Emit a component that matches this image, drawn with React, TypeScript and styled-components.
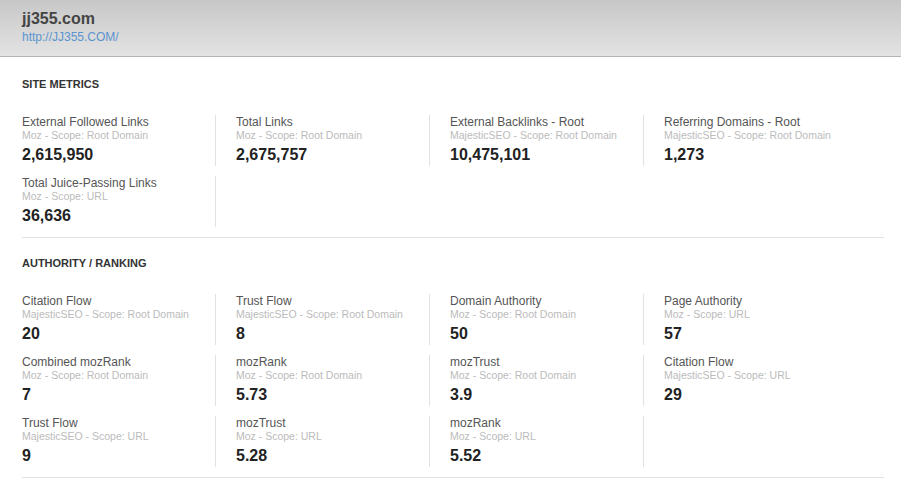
import React from "react";
import styled, { createGlobalStyle } from "styled-components";

const Global = createGlobalStyle`
  html, body { margin: 0; padding: 0; background: #fff; }
  body { font-family: Arial, "Liberation Sans", Helvetica, sans-serif; }
`;

const Page = styled.div`
  width: 901px;
  min-height: 492px;
  background: #fff;
`;

const Header = styled.header`
  box-sizing: content-box;
  height: 47px;
  padding: 9px 22px 0;
  background: linear-gradient(to bottom, #c7c7c7 0%, #e3e3e3 100%);
  border-bottom: 1px solid #b3b3b3;
`;

const Title = styled.h1`
  margin: 0;
  font-size: 16px;
  line-height: 20px;
  font-weight: bold;
  color: #444;
`;

const Url = styled.a`
  display: block;
  margin-top: 1px;
  font-size: 12px;
  line-height: 14px;
  color: #5a94cf;
  text-decoration: none;
`;

const Body = styled.main`
  padding: 2px 17px 0 22px;
`;

const Section = styled.section`
  padding: 18px 0 10px;
  border-bottom: 1px solid #e3e3e3;
`;

const SectionTitle = styled.h2`
  margin: 0 0 24px;
  font-size: 11px;
  line-height: 14px;
  font-weight: bold;
  text-transform: uppercase;
  color: #333;
`;

const Grid = styled.div`
  display: grid;
  grid-template-columns: repeat(4, 194px);
  column-gap: 20px;
  row-gap: 10px;
`;

const Cell = styled.div<{ $last: boolean }>`
  height: 51px;
  box-sizing: border-box;
  border-right: ${(p) => (p.$last ? "none" : "1px solid #e2e2e2")};
`;

const Label = styled.div`
  font-size: 12px;
  line-height: 14px;
  color: #555;
  white-space: nowrap;
`;

const Source = styled.div`
  font-size: 10.5px;
  line-height: 13px;
  color: #bbb;
  white-space: nowrap;
`;

const Value = styled.div`
  margin-top: 3px;
  font-size: 16px;
  line-height: 20px;
  font-weight: bold;
  color: #222;
`;

type Metric = { label: string; source: string; value: string };

const siteMetrics: Metric[] = [
  { label: "External Followed Links", source: "Moz - Scope: Root Domain", value: "2,615,950" },
  { label: "Total Links", source: "Moz - Scope: Root Domain", value: "2,675,757" },
  { label: "External Backlinks - Root", source: "MajesticSEO - Scope: Root Domain", value: "10,475,101" },
  { label: "Referring Domains - Root", source: "MajesticSEO - Scope: Root Domain", value: "1,273" },
  { label: "Total Juice-Passing Links", source: "Moz - Scope: URL", value: "36,636" },
];

const authority: Metric[] = [
  { label: "Citation Flow", source: "MajesticSEO - Scope: Root Domain", value: "20" },
  { label: "Trust Flow", source: "MajesticSEO - Scope: Root Domain", value: "8" },
  { label: "Domain Authority", source: "Moz - Scope: Root Domain", value: "50" },
  { label: "Page Authority", source: "Moz - Scope: URL", value: "57" },
  { label: "Combined mozRank", source: "Moz - Scope: Root Domain", value: "7" },
  { label: "mozRank", source: "Moz - Scope: Root Domain", value: "5.73" },
  { label: "mozTrust", source: "Moz - Scope: Root Domain", value: "3.9" },
  { label: "Citation Flow", source: "MajesticSEO - Scope: URL", value: "29" },
  { label: "Trust Flow", source: "MajesticSEO - Scope: URL", value: "9" },
  { label: "mozTrust", source: "Moz - Scope: URL", value: "5.28" },
  { label: "mozRank", source: "Moz - Scope: URL", value: "5.52" },
];

const MetricSection = ({ title, items }: { title: string; items: Metric[] }) => (
  <Section>
    <SectionTitle>{title}</SectionTitle>
    <Grid>
      {items.map((m, i) => (
        <Cell key={i} $last={i % 4 === 3}>
          <Label>{m.label}</Label>
          <Source>{m.source}</Source>
          <Value>{m.value}</Value>
        </Cell>
      ))}
    </Grid>
  </Section>
);

export default function App() {
  return (
    <Page>
      <Global />
      <Header>
        <Title>jj355.com</Title>
        <Url href="#">http://JJ355.COM/</Url>
      </Header>
      <Body>
        <MetricSection title="Site Metrics" items={siteMetrics} />
        <MetricSection title="Authority / Ranking" items={authority} />
      </Body>
    </Page>
  );
}
